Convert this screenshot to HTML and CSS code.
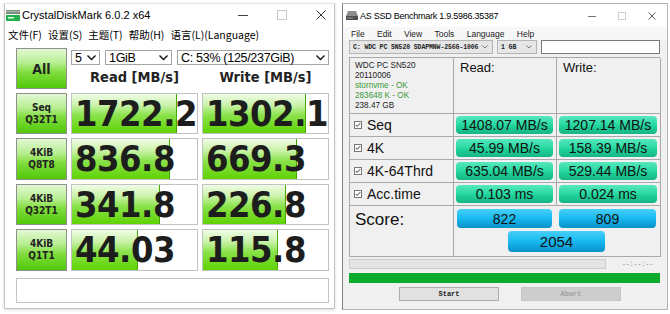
FILE: index.html
```html
<!DOCTYPE html>
<html lang="zh-CN">
  <head>
    <meta charset="UTF-8" />
    <title>CrystalDiskMark / AS SSD Benchmark</title>
    <link rel="stylesheet" href="styles.css">
  </head>
  <body>
    <!-- CrystalDiskMark window -->
    <div class="cdm">
      <div class="titlebar">
        <svg class="app-icon" width="14" height="11" viewBox="0 0 14 11">
          <rect x="0" y="0" width="14" height="4" fill="#7d8f7d" />
          <rect x="0" y="1" width="14" height="1" fill="#a9b8a9" />
          <rect x="0" y="5" width="14" height="6" fill="#22b14c" />
          <rect x="2" y="7" width="6" height="1.5" fill="#e8ffe8" />
        </svg>
        <span class="title">CrystalDiskMark 6.0.2 x64</span>
        <div class="win-ctrls">
          <svg width="10" height="10" viewBox="0 0 10 10"><path d="M0 5.5h10" stroke="#444" /></svg>
          <svg width="10" height="10" viewBox="0 0 10 10"><rect x="0.5" y="0.5" width="9" height="9" fill="none" stroke="#c8c8c8" /></svg>
          <svg width="10" height="10" viewBox="0 0 10 10"><path d="M0.5 0.5l9 9M9.5 0.5l-9 9" stroke="#333" /></svg>
        </div>
      </div>

      <div class="cdm-menu">
        <span>文件(F)</span>
        <span>设置(S)</span>
        <span>主题(T)</span>
        <span>帮助(H)</span>
        <span>语言(L)(Language)</span>
      </div>

      <div class="cdm-body">
        <div class="cdm-grid">
          <div class="cdm-btn all">All</div>
          <div class="cdm-top">
            <div class="cdm-selects">
              <div class="dd dd-count"><span>5</span><svg width="9" height="6" viewBox="0 0 9 6"><path d="M0.5 0.5l4 4 4-4" fill="none" stroke="#111" stroke-width="1.4" /></svg></div>
              <div class="dd dd-size"><span>1GiB</span><svg width="9" height="6" viewBox="0 0 9 6"><path d="M0.5 0.5l4 4 4-4" fill="none" stroke="#111" stroke-width="1.4" /></svg></div>
              <div class="dd dd-drive"><span>C: 53% (125/237GiB)</span><svg width="9" height="6" viewBox="0 0 9 6"><path d="M0.5 0.5l4 4 4-4" fill="none" stroke="#111" stroke-width="1.4" /></svg></div>
            </div>
            <div class="cdm-heads">
              <span>Read [MB/s]</span>
              <span>Write [MB/s]</span>
            </div>
          </div>

          <div class="cdm-btn">Seq<br>Q32T1</div>
          <div class="cdm-val"><div class="fill" style="width:84%"></div><span>1722.2</span></div>
          <div class="cdm-val"><div class="fill" style="width:82%"></div><span>1302.1</span></div>

          <div class="cdm-btn">4KiB<br>Q8T8</div>
          <div class="cdm-val"><div class="fill" style="width:78%"></div><span>836.8</span></div>
          <div class="cdm-val"><div class="fill" style="width:75%"></div><span>669.3</span></div>

          <div class="cdm-btn">4KiB<br>Q32T1</div>
          <div class="cdm-val"><div class="fill" style="width:70%"></div><span>341.8</span></div>
          <div class="cdm-val"><div class="fill" style="width:66%"></div><span>226.8</span></div>

          <div class="cdm-btn">4KiB<br>Q1T1</div>
          <div class="cdm-val"><div class="fill" style="width:53%"></div><span>44.03</span></div>
          <div class="cdm-val"><div class="fill" style="width:60%"></div><span>115.8</span></div>
        </div>
        <div class="cdm-comment"></div>
      </div>
    </div>

    <!-- AS SSD Benchmark window -->
    <div class="asssd">
      <div class="titlebar">
        <svg class="app-icon" width="12" height="9" viewBox="0 0 12 9">
          <polygon points="2,0 10,0 12,5 0,5" fill="#8c8c8c" />
          <rect x="0" y="5" width="12" height="4" fill="#4e4e4e" />
          <rect x="1" y="6.5" width="6" height="1" fill="#9a9a9a" />
        </svg>
        <span class="title">AS SSD Benchmark 1.9.5986.35387</span>
        <div class="win-ctrls">
          <svg width="8" height="8" viewBox="0 0 8 8"><path d="M0 4.5h8" stroke="#777" /></svg>
          <svg width="8" height="8" viewBox="0 0 8 8"><rect x="0.5" y="0.5" width="7" height="7" fill="none" stroke="#d0d0d0" /></svg>
          <svg width="8" height="8" viewBox="0 0 8 8"><path d="M0.5 0.5l7 7M7.5 0.5l-7 7" stroke="#555" /></svg>
        </div>
      </div>

      <div class="as-menu">
        <span>File</span>
        <span>Edit</span>
        <span>View</span>
        <span>Tools</span>
        <span>Language</span>
        <span>Help</span>
      </div>

      <div class="as-toolbar">
        <div class="as-dd as-drive"><span>C: WDC PC SN520 SDAPMNW-256G-1006</span><svg width="6" height="4" viewBox="0 0 6 4"><path d="M0.5 0.5l2.5 2.5 2.5-2.5" fill="none" stroke="#777" /></svg></div>
        <div class="as-dd as-size"><span>1 GB</span><svg width="6" height="4" viewBox="0 0 6 4"><path d="M0.5 0.5l2.5 2.5 2.5-2.5" fill="none" stroke="#777" /></svg></div>
        <div class="as-input"></div>
      </div>

      <div class="as-grid">
        <div class="as-info">
          <div>WDC PC SN520</div>
          <div>20110006</div>
          <div class="ok">stornvme - OK</div>
          <div class="ok">283648 K - OK</div>
          <div>238.47 GB</div>
        </div>
        <div class="as-head">Read:</div>
        <div class="as-head">Write:</div>

        <div class="as-label"><svg width="8" height="8" viewBox="0 0 8 8"><rect x="0.5" y="0.5" width="7" height="7" fill="#fff" stroke="#777" /><path d="M1.8 4l1.4 1.4 3-3.2" fill="none" stroke="#333" /></svg>Seq</div>
        <div class="as-cell"><div class="pill">1408.07 MB/s</div></div>
        <div class="as-cell"><div class="pill">1207.14 MB/s</div></div>

        <div class="as-label"><svg width="8" height="8" viewBox="0 0 8 8"><rect x="0.5" y="0.5" width="7" height="7" fill="#fff" stroke="#777" /><path d="M1.8 4l1.4 1.4 3-3.2" fill="none" stroke="#333" /></svg>4K</div>
        <div class="as-cell"><div class="pill">45.99 MB/s</div></div>
        <div class="as-cell"><div class="pill">158.39 MB/s</div></div>

        <div class="as-label"><svg width="8" height="8" viewBox="0 0 8 8"><rect x="0.5" y="0.5" width="7" height="7" fill="#fff" stroke="#777" /><path d="M1.8 4l1.4 1.4 3-3.2" fill="none" stroke="#333" /></svg>4K-64Thrd</div>
        <div class="as-cell"><div class="pill">635.04 MB/s</div></div>
        <div class="as-cell"><div class="pill">529.44 MB/s</div></div>

        <div class="as-label"><svg width="8" height="8" viewBox="0 0 8 8"><rect x="0.5" y="0.5" width="7" height="7" fill="#fff" stroke="#777" /><path d="M1.8 4l1.4 1.4 3-3.2" fill="none" stroke="#333" /></svg>Acc.time</div>
        <div class="as-cell"><div class="pill">0.103 ms</div></div>
        <div class="as-cell"><div class="pill">0.024 ms</div></div>

        <div class="as-score-label">Score:</div>
        <div class="as-score">
          <div class="pill blue">822</div>
          <div class="pill blue">809</div>
          <div class="pill blue total">2054</div>
        </div>
      </div>

      <div class="as-progress">
        <div class="bar"></div>
        <span class="time">--:--:--</span>
      </div>
      <div class="as-green"></div>
      <div class="as-buttons">
        <div class="as-btn">Start</div>
        <div class="as-btn disabled">Abort</div>
      </div>
    </div>
  </body>
</html>
```

FILE: styles.css
```css
* {
  box-sizing: border-box;
}
body {
  margin: 0;
  width: 670px;
  height: 314px;
  overflow: hidden;
  background: #fff;
  display: flex;
  align-items: flex-start;
  font-family: "Liberation Sans", Arial, sans-serif;
  color: #111;
}

/* shared window chrome */
.titlebar {
  display: flex;
  align-items: center;
  background: #fff;
}
.app-icon {
  flex: none;
}
.win-ctrls {
  margin-left: auto;
  display: flex;
  align-items: center;
}
.win-ctrls svg {
  display: block;
}

/* CrystalDiskMark */
.cdm {
  margin: 3px 0 0 4px;
  width: 331px;
  height: 306px;
  background: #fff;
  border: 1px solid #c4c4c4;
  border-top-color: #e4e4e4;
  box-shadow: 0 1px 3px rgba(0, 0, 0, 0.15);
}
.cdm .titlebar {
  height: 22px;
  padding-left: 1px;
}
.cdm .title {
  margin-left: 2px;
  font-size: 11px;
  color: #000;
}
.cdm .win-ctrls {
  gap: 29px;
  padding-right: 8px;
}
.cdm-menu {
  height: 17px;
  display: flex;
  align-items: center;
  gap: 6px;
  padding-left: 3px;
  font-family: "Noto Sans CJK SC", sans-serif;
  font-size: 10.5px;
  color: #000;
}
.cdm-body {
  padding: 5px 0 0 11px;
}
.cdm-grid {
  display: grid;
  grid-template-columns: 51px 127px 127px;
  grid-template-rows: 41px 41px 42px 41px 42px;
  gap: 4px;
}
.cdm-btn {
  display: flex;
  align-items: center;
  justify-content: center;
  text-align: center;
  border: 1px solid #8f8f8f;
  background: linear-gradient(#e2f8d4 0%, #b8ee92 35%, #7fdc3c 60%, #52c80a 100%);
  font: bold 10px/12px "DejaVu Sans Condensed", "DejaVu Sans", sans-serif;
  font-stretch: condensed;
  color: #222;
}
.cdm-btn.all {
  font-size: 14px;
}
.cdm-top {
  grid-column: span 2;
  display: flex;
  flex-direction: column;
}
.cdm-selects {
  display: flex;
  gap: 5px;
  margin-top: 2px;
  height: 15px;
}
.dd {
  display: flex;
  align-items: center;
  justify-content: space-between;
  padding: 0 3px 0 3px;
  border: 1px solid #a4a4a4;
  background: #fff;
  font-size: 12.5px;
  letter-spacing: -0.3px;
  color: #000;
}
.dd-count {
  width: 29px;
}
.dd-size {
  width: 67px;
}
.dd-drive {
  width: 152px;
}
.cdm-heads {
  flex: 1;
  display: grid;
  grid-template-columns: 127px 127px;
  gap: 4px;
  align-items: center;
  text-align: center;
  font: bold 14.5px "DejaVu Sans Condensed", "DejaVu Sans", sans-serif;
  font-stretch: condensed;
  color: #222;
}
.cdm-val {
  display: grid;
  border: 1px solid #c2c2c2;
  background: #fff;
  overflow: hidden;
}
.cdm-val > * {
  grid-area: 1 / 1;
}
.cdm-val .fill {
  height: 100%;
  background: linear-gradient(#f0fce8 0%, #c8f2a6 30%, #8ae24a 55%, #60d204 100%);
  border-right: 1px solid #46a800;
}
.cdm-val span {
  z-index: 1;
  padding-left: 3px;
  white-space: nowrap;
  font: bold 36px/39px "DejaVu Sans Condensed", "DejaVu Sans", sans-serif;
  font-stretch: condensed;
  letter-spacing: -0.5px;
  color: #1d1d1d;
}
.cdm-comment {
  margin-top: 7px;
  width: 313px;
  height: 25px;
  border: 1px solid #c4c4c4;
}

/* AS SSD Benchmark */
.asssd {
  margin: 3px 0 0 7px;
  width: 326px;
  height: 307px;
  background: #f0f0f0;
  border: 1px solid #b4b4b4;
  border-left-color: #7d7d7d;
}
.asssd .titlebar {
  height: 23px;
  padding-left: 3px;
}
.asssd .title {
  margin-left: 2px;
  font-size: 9px;
  letter-spacing: -0.25px;
  color: #000;
}
.asssd .win-ctrls {
  gap: 22px;
  padding-right: 11px;
}
.as-menu {
  height: 13px;
  display: flex;
  align-items: center;
  gap: 12.3px;
  padding-left: 8px;
  background: #f7f7f7;
  font-size: 8.5px;
  color: #222;
}
.as-toolbar {
  display: flex;
  gap: 4px;
  padding-left: 6px;
  height: 14px;
}
.as-dd {
  display: flex;
  align-items: center;
  justify-content: space-between;
  padding: 0 4px 0 3px;
  border: 1px solid #b4b4b4;
  background: #e6e6e6;
  font: bold 6.5px "Liberation Mono", monospace;
  letter-spacing: -0.1px;
  color: #222;
}
.as-drive {
  width: 144px;
}
.as-size {
  width: 40px;
}
.as-input {
  width: 119px;
  background: #fff;
  border: 1px solid #7a7a7a;
}
.as-grid {
  margin: 3px 0 0 6px;
  width: 311px;
  display: grid;
  grid-template-columns: 104px 103px 104px;
  grid-template-rows: 56px 23px 23px 23px 23px 51px;
  border-top: 1px solid #a9a9a9;
  border-left: 1px solid #a9a9a9;
}
.as-grid > div {
  border-right: 1px solid #a9a9a9;
  border-bottom: 1px solid #a9a9a9;
}
.as-info {
  padding: 3px 0 0 5px;
  font-size: 8.2px;
  line-height: 10px;
  color: #222;
}
.as-info .ok {
  color: #3a9a3a;
}
.as-head {
  padding: 2px 0 0 6px;
  font-size: 13px;
  color: #111;
}
.as-label {
  display: flex;
  align-items: center;
  gap: 5px;
  padding-left: 4px;
  font-size: 14px;
  color: #111;
}
.as-label svg {
  flex: none;
}
.as-cell {
  padding: 2px 3px 2px 2px;
}
.pill {
  height: 100%;
  display: flex;
  align-items: center;
  justify-content: center;
  border-radius: 4px;
  background: linear-gradient(#58e8bd 0%, #2bdaa4 45%, #1ecf97 60%, #17b585 100%);
  font-size: 14px;
  color: #111;
}
.pill.blue {
  background: linear-gradient(#48cff7 0%, #1cbcf1 45%, #12afe7 60%, #0b92c8 100%);
}
.as-score-label {
  padding: 4px 0 0 5px;
  font-size: 17px;
  color: #111;
}
.as-grid > .as-score {
  grid-column: span 2;
  display: grid;
  grid-template-columns: 95px 97px;
  grid-template-rows: 19px 21px;
  column-gap: 7px;
  row-gap: 3px;
  padding: 3px 0 0 3px;
}
.pill.total {
  grid-column: span 2;
  justify-self: center;
  width: 97px;
  font-size: 15px;
}
.as-progress {
  display: flex;
  align-items: center;
  margin: 2px 0 0 6px;
  height: 10px;
}
.as-progress .bar {
  width: 257px;
  height: 10px;
  background: #e4e4e4;
  border: 1px solid #cdcdcd;
}
.as-progress .time {
  margin-left: 16px;
  font: 6.5px "Liberation Mono", monospace;
  color: #888;
}
.as-green {
  margin: 4px 0 0 6px;
  width: 311px;
  height: 10px;
  background: #0cab2c;
}
.as-buttons {
  display: flex;
  gap: 22px;
  margin: 4px 0 0 56px;
}
.as-btn {
  width: 100px;
  height: 14px;
  display: flex;
  align-items: center;
  justify-content: center;
  background: #e1e1e1;
  border: 1px solid #adadad;
  font: bold 7px "Liberation Mono", monospace;
  color: #222;
}
.as-btn.disabled {
  background: #cdcdcd;
  border-color: #c6c6c6;
  color: #a0a0a0;
}
```
